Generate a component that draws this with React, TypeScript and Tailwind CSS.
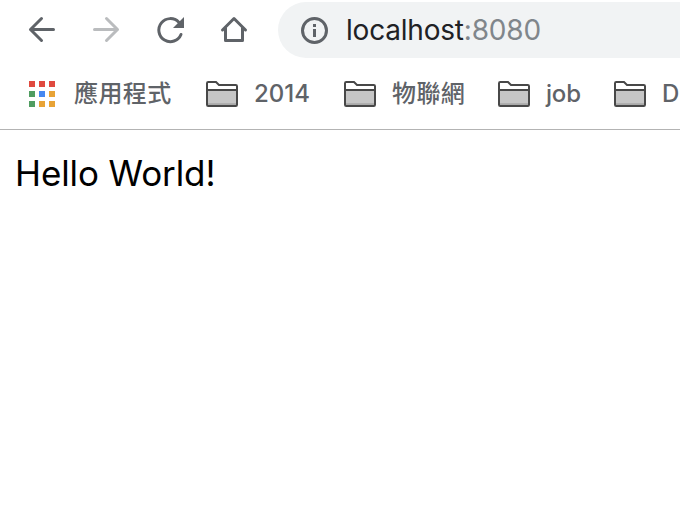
import React from "react";

function FolderIcon() {
  return (
    <svg className="h-7 w-8 shrink-0" viewBox="0 0 32 28" fill="none">
      <path d="M1 10H31V26H1Z" fill="#c6c6c6" />
      <path d="M1 23.200H31V26H1Z" fill="#a9a9a9" />
      <path
        d="M1 3.200Q1 2 2.200 2H10L13 5H29.800Q31 5 31 6.200V24.800Q31 26 29.800 26H2.200Q1 26 1 24.800ZM1 10H31"
        stroke="#484848"
        strokeWidth="2"
      />
    </svg>
  );
}

const appColors = [
  "bg-[#e04a3f]", "bg-[#e04a3f]", "bg-[#e04a3f]",
  "bg-[#509d61]", "bg-[#4688f1]", "bg-[#e8a336]",
  "bg-[#509d61]", "bg-[#e8a336]", "bg-[#e8a336]",
];

function Bookmark({ label, box, text }: { label: string; box: string; text: string }) {
  return (
    <div className={`flex shrink-0 items-center gap-4 ${box}`}>
      <FolderIcon />
      <span className={`whitespace-nowrap leading-8 ${text}`}>{label}</span>
    </div>
  );
}

export default function App() {
  return (
    <div className="h-[530px] w-[680px] overflow-hidden bg-white font-[Inter,'Noto_Sans_CJK_TC',sans-serif]">
      <header className="flex h-[130px] flex-col border-b border-[#b3b3b3]">
        <nav className="flex h-[60px] shrink-0 items-center pl-[26px]">
          <svg className="mr-8 h-8 w-8 shrink-0" viewBox="0 0 32 32" fill="none" stroke="#5f6368" strokeWidth="3" strokeLinecap="round" strokeLinejoin="round">
            <path d="M27.500 15.500H4.500M15.500 4.500L4.500 15.500L15.500 26.500" />
          </svg>
          <svg className="mr-8 h-8 w-8 shrink-0" viewBox="0 0 32 32" fill="none" stroke="#babcbe" strokeWidth="3" strokeLinecap="round" strokeLinejoin="round">
            <path d="M4.500 15.500H27.500M16.500 4.500L27.500 15.500L16.500 26.500" />
          </svg>
          <svg className="mr-8 h-8 w-8 shrink-0" viewBox="0 0 32 32" fill="none">
            <path d="M24.800 8.300A11.500 11.500 0 1 0 27 20.500" stroke="#5f6368" strokeWidth="3" strokeLinecap="round" />
            <path d="M30 3V14H19Z" fill="#5f6368" />
          </svg>
          <svg className="mr-7 h-8 w-8 shrink-0" viewBox="0 0 32 32" fill="none" stroke="#5f6368" strokeWidth="3" strokeLinecap="round" strokeLinejoin="round">
            <path d="M4.500 16L16 4.500L27.500 16M7.500 14V26.500H24.500V14" />
          </svg>
          <div className="flex h-14 flex-1 items-center rounded-l-full bg-[#f1f3f4] pl-[22px]">
            <svg className="mr-[18px] h-7 w-7 shrink-0" viewBox="0 0 28 28" fill="none">
              <circle cx="14.500" cy="14.500" r="12" stroke="#5f6368" strokeWidth="3" />
              <path d="M13 8H16V11H13ZM13 13H16V21H13Z" fill="#5f6368" />
            </svg>
            <span className="whitespace-nowrap text-[28px] leading-8 tracking-[-0.2px] text-[#202124]">
              localhost<span className="text-[#80868b]">:8080</span>
            </span>
          </div>
        </nav>
        <div className="flex h-[68px] items-center pl-[29px] text-2xl font-medium text-[#5f6368]">
          <div className="grid w-[26px] shrink-0 grid-cols-3 gap-1">
            {appColors.map((color, i) => (
              <i key={i} className={`h-1.5 w-1.5 ${color}`} />
            ))}
          </div>
          <span className="ml-[19px] w-[132px] shrink-0 whitespace-nowrap leading-8 tracking-[0.4px]">應用程式</span>
          <Bookmark label="2014" box="w-[138px]" text="" />
          <Bookmark label="物聯網" box="w-[154px]" text="tracking-[0.4px]" />
          <Bookmark label="job" box="w-[116px]" text="tracking-[-0.2px]" />
          <Bookmark label="D" box="w-[116px]" text="" />
        </div>
      </header>
      <main className="px-[15px] pt-[23px] text-[35px] leading-10 tracking-[-0.1px] text-black">Hello World!</main>
    </div>
  );
}
